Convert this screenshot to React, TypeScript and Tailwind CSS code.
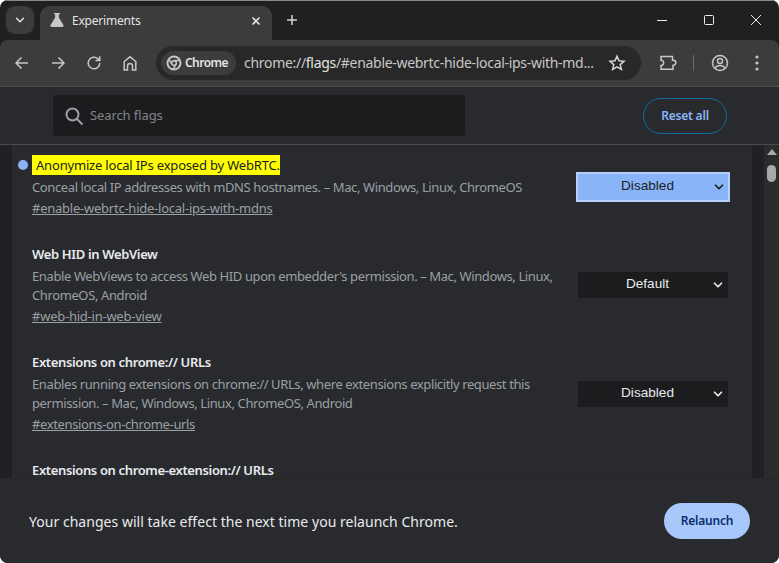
import { ChevronDown } from "lucide-react";

const FONT = "font-['Noto_Sans','Open_Sans',sans-serif]";

function ToolIcon({ children, className = "" }: { children: React.ReactNode; className?: string }) {
  return (
    <svg width="20" height="20" viewBox="0 0 20 20" fill="none" stroke="#c7c7c7" strokeWidth="1.5" className={className}>
      {children}
    </svg>
  );
}

function FlagSelect({ value, active = false, className = "" }: { value: string; active?: boolean; className?: string }) {
  return (
    <div
      className={
        active
          ? `relative flex h-[30px] w-[154px] shrink-0 items-center justify-center border-2 border-[#b4cffb] bg-[#8ab4f8] pr-[11px] font-['Liberation_Sans',sans-serif] text-[13.6px] text-[#202124] ${className}`
          : `relative flex h-[26px] w-[150px] shrink-0 items-center justify-center bg-[#1c1c1e] pr-[11px] font-['Liberation_Sans',sans-serif] text-[13.6px] text-[#e8eaed] ${className}`
      }
    >
      {value}
      <ChevronDown
        size={14}
        strokeWidth={3}
        className={active ? "absolute right-[2px] text-[#202124]" : "absolute right-[3px] text-[#e8eaed]"}
      />
    </div>
  );
}

function Flag({
  title,
  lines,
  hash,
  select,
  className,
  hashClass,
  selectClass,
}: {
  title: string;
  lines: string[];
  hash: string;
  select: string;
  className: string;
  hashClass: string;
  selectClass?: string;
}) {
  return (
    <div className={`flex items-center justify-between pl-[20px] pr-[24px] ${className}`}>
      <div className="w-[535px]">
        <div className="text-[13px] leading-[18px] font-semibold tracking-[-0.36px] whitespace-nowrap text-[#e8eaed]">{title}</div>
        <div className="mt-[4px] text-[13px] leading-[19px] tracking-[-0.39px] whitespace-nowrap text-[#9aa0a6]">
          {lines.map((l) => (
            <div key={l}>{l}</div>
          ))}
        </div>
        <div className={`mt-[2px] text-[13px] leading-[19px] text-[#9aa0a6] underline ${hashClass}`}>{hash}</div>
      </div>
      <FlagSelect value={select} className={selectClass} />
    </div>
  );
}

export default function App() {
  return (
    <div className={`relative flex h-[563px] w-[779px] flex-col overflow-hidden rounded-t-[8px] rounded-b-[8px] bg-[#1f2020] ${FONT}`}>
      {/* tab strip */}
      <div className="flex h-[40px] shrink-0 items-start border-t border-[#8a8a8a] pl-[6px]">
        <div className="mt-[5px] flex h-[28px] w-[28px] items-center justify-center rounded-[9px] bg-[#3c3c3c]">
          <ChevronDown size={14} strokeWidth={2.5} className="text-[#e3e3e3]" />
        </div>
        <div className="mt-[5px] ml-[6px] flex h-[34px] w-[232px] items-start rounded-t-[10px] bg-[#3c3c3c] pt-[6px] pl-[9px]">
          <svg width="16" height="16" viewBox="0 0 16 16" fill="#c7c7c7">
            <path d="M5 1h6v1.2H9.9v3.2L14.4 13c.5 1-.1 2-1.2 2H2.8c-1.1 0-1.7-1-1.2-2l4.5-7.6V2.200H5z" />
          </svg>
          <span className="ml-[7px] text-[12px] leading-[18px] tracking-[-0.2px] text-[#e3e3e3]">Experiments</span>
          <svg width="12" height="12" viewBox="0 0 12 12" stroke="#e3e3e3" strokeWidth="1.6" className="mt-[3px] ml-[109px]">
            <path d="M2.500 2.500l7 7M9.500 2.500l-7 7" />
          </svg>
        </div>
        <svg width="14" height="14" viewBox="0 0 14 14" stroke="#d5d5d5" strokeWidth="1.500" className="mt-[12px] ml-[13px]">
          <path d="M7 2v10M2 7h10" />
        </svg>
        <div className="ml-auto mt-[13px] flex items-start">
          <svg width="12" height="12" viewBox="0 0 12 12" stroke="#ededed" strokeWidth="1" className="mr-[35px]">
            <path d="M1 6.500h10" />
          </svg>
          <svg width="12" height="12" viewBox="0 0 12 12" fill="none" stroke="#ededed" strokeWidth="1" className="mr-[35px]">
            <rect x="1.500" y="1.500" width="9" height="9" rx="1" />
          </svg>
          <svg width="12" height="12" viewBox="0 0 12 12" stroke="#ededed" strokeWidth="1" className="mr-[17px]">
            <path d="M1 1l10 10M11 1L1 11" />
          </svg>
        </div>
      </div>

      {/* toolbar */}
      <div className="flex h-[47px] shrink-0 items-center rounded-t-[8px] border-b border-[#4a4a4a] bg-[#3c3c3c] pl-[12px]">
        <ToolIcon>
          <path d="M16 10H4.500M9.500 4.500L4 10l5.500 5.500" />
        </ToolIcon>
        <ToolIcon className="ml-[16px]">
          <path d="M4 10h11.500M10.500 4.500L16 10l-5.500 5.500" />
        </ToolIcon>
        <ToolIcon className="ml-[16px]">
          <path d="M15.800 10a5.800 5.800 0 1 1-1.700-4.100L15.800 7.500M15.800 3.200v4.300h-4.300" />
        </ToolIcon>
        <ToolIcon className="ml-[16px]">
          <path d="M4.200 17V8.500L10 3.800l5.800 4.700V17h-3.300v-4a2.500 2.500 0 0 0-5 0v4z" />
        </ToolIcon>
        <div className="ml-[16px] flex h-[34px] w-[485px] items-center rounded-full bg-[#282828] pl-[5px]">
          <div className="flex h-[24px] w-[75px] shrink-0 items-center rounded-full bg-[#3c3c3c] pl-[5px]">
            <svg width="16" height="16" viewBox="0 0 16 16" fill="none" stroke="#c7c7c7" strokeWidth="2">
              <circle cx="8" cy="8" r="6.500" />
              <circle cx="8" cy="8" r="2.300" strokeWidth="1.500" />
              <path d="M8 5.500h6M5.800 9.200L3 4.300M10.100 9.200L7 14.500" strokeWidth="1.500" />
            </svg>
            <span className="ml-[3px] text-[12px] leading-none font-semibold tracking-[-0.55px] text-[#e3e3e3]">Chrome</span>
          </div>
          <span className="ml-[8px] text-[14px] leading-none tracking-[-0.3px] whitespace-nowrap text-[#c7c7c7]">
            chrome://
            <span className="text-[#e3e3e3]">flags</span>
            /#enable-webrtc-hide-local-ips-with-md...
          </span>
          <svg width="18" height="18" viewBox="0 0 18 18" fill="none" stroke="#d5d5d5" strokeWidth="1.500" className="mr-[15px] ml-auto shrink-0">
            <path d="M9 2.200l2 4.600 5 .5-3.800 3.300 1.200 4.900L9 12.900l-4.400 2.600 1.200-4.900L2 7.300l5-.5z" />
          </svg>
        </div>
        <ToolIcon className="ml-[17px]">
          <path d="M3 3.500h11.500v3.700h.8a2.500 2.500 0 0 1 0 5h-.3v4H3v-3.700h.8a2.800 2.800 0 0 0 0-5.300H3z" />
        </ToolIcon>
        <div className="ml-[15px] h-[16px] w-[1px] bg-[#6a6a6a]" />
        <ToolIcon className="ml-[16px]">
          <circle cx="10" cy="10" r="7.500" />
          <circle cx="10" cy="8" r="2.500" />
          <path d="M5 15c1.200-2 3-2.600 5-2.600s3.800.6 5 2.600" />
        </ToolIcon>
        <svg width="4" height="16" viewBox="0 0 4 16" fill="#c7c7c7" className="ml-[25px]">
          <circle cx="2" cy="2" r="1.600" />
          <circle cx="2" cy="8" r="1.600" />
          <circle cx="2" cy="14" r="1.600" />
        </svg>
      </div>

      {/* search header */}
      <div className="flex h-[58px] shrink-0 items-center justify-between border-b border-[#4a4b4d] bg-[#292a2d] pr-[52px] pl-[53px]">
        <div className="flex h-[41px] w-[412px] items-center rounded-[3px] bg-[#1c1c1e] pl-[11px]">
          <svg width="20" height="20" viewBox="0 0 20 20" fill="none" stroke="#9aa0a6" strokeWidth="2">
            <circle cx="8.500" cy="8.500" r="6" />
            <path d="M13 13l5.500 5.500" />
          </svg>
          <span className="ml-[6px] text-[13px] tracking-[-0.1px] text-[#808488]">Search flags</span>
        </div>
        <div className="flex h-[36px] w-[84px] items-center justify-center rounded-full border border-[#0b6fa4] text-[12px] font-semibold tracking-[-0.2px] text-[#8ab4f8]">
          Reset all
        </div>
      </div>

      {/* experiments list */}
      <div className="flex min-h-0 flex-1 bg-[#202124]">
        <div className="w-[12px] shrink-0" />
        <div className="min-h-0 w-[740px] overflow-hidden bg-[#292a2d]">
          <div className="relative flex items-center justify-between pt-[10px] pr-[22px] pl-[20px]">
            <div className="absolute top-[15px] left-[6px] h-[10px] w-[10px] rounded-full bg-[#8ab4f8]" />
            <div>
              <div className="w-fit bg-[#ffff00] pl-[4px] text-[13px] leading-[20px] tracking-[-0.19px] text-[#202124]">
                Anonymize local IPs exposed by WebRTC.
              </div>
              <div className="mt-[3px] text-[13px] leading-[19px] tracking-[-0.39px] text-[#9aa0a6]">
                Conceal local IP addresses with mDNS hostnames. – Mac, Windows, Linux, ChromeOS
              </div>
              <div className="mt-[2px] text-[13px] leading-[19px] tracking-[-0.24px] text-[#9aa0a6] underline">
                #enable-webrtc-hide-local-ips-with-mdns
              </div>
            </div>
            <FlagSelect value="Disabled" active />
          </div>
          <Flag
            className="mt-[27px]"
            title="Web HID in WebView"
            lines={[
              "Enable WebViews to access Web HID upon embedder's permission. – Mac, Windows, Linux,",
              "ChromeOS, Android",
            ]}
            hash="#web-hid-in-web-view"
            hashClass="tracking-[-0.24px]"
            select="Default"
            selectClass="mb-[2px]"
          />
          <Flag
            className="mt-[27px]"
            title="Extensions on chrome:// URLs"
            lines={[
              "Enables running extensions on chrome:// URLs, where extensions explicitly request this",
              "permission. – Mac, Windows, Linux, ChromeOS, Android",
            ]}
            hash="#extensions-on-chrome-urls"
            hashClass="tracking-[-0.36px]"
            select="Disabled"
          />
          <div className="mt-[27px] pl-[20px] text-[13px] leading-[18px] font-semibold tracking-[-0.36px] text-[#e8eaed]">
            Extensions on chrome-extension:// URLs
          </div>
        </div>
        <div className="w-[12px] shrink-0" />
        <div className="flex w-[15px] shrink-0 flex-col items-center bg-[#2b2b29] pt-[4px]">
          <div className="h-0 w-0 border-x-[5px] border-b-[6px] border-x-transparent border-b-[#a8a8a8]" />
          <div className="mt-[10px] h-[17px] w-[9px] rounded-full bg-[#a8a8a8]" />
        </div>
      </div>

      {/* relaunch footer */}
      <div className="flex h-[85px] shrink-0 items-center justify-between border-t border-[#26272a] bg-[#292a2d] pr-[29px] pl-[29px]">
        <span className="text-[14px] tracking-[0.03px] text-[#e8eaed]">Your changes will take effect the next time you relaunch Chrome.</span>
        <div className="flex h-[36px] w-[86px] items-center justify-center rounded-full bg-[#a8c7fa] text-[12px] font-semibold tracking-[-0.2px] text-[#062e6f]">
          Relaunch
        </div>
      </div>
    </div>
  );
}
